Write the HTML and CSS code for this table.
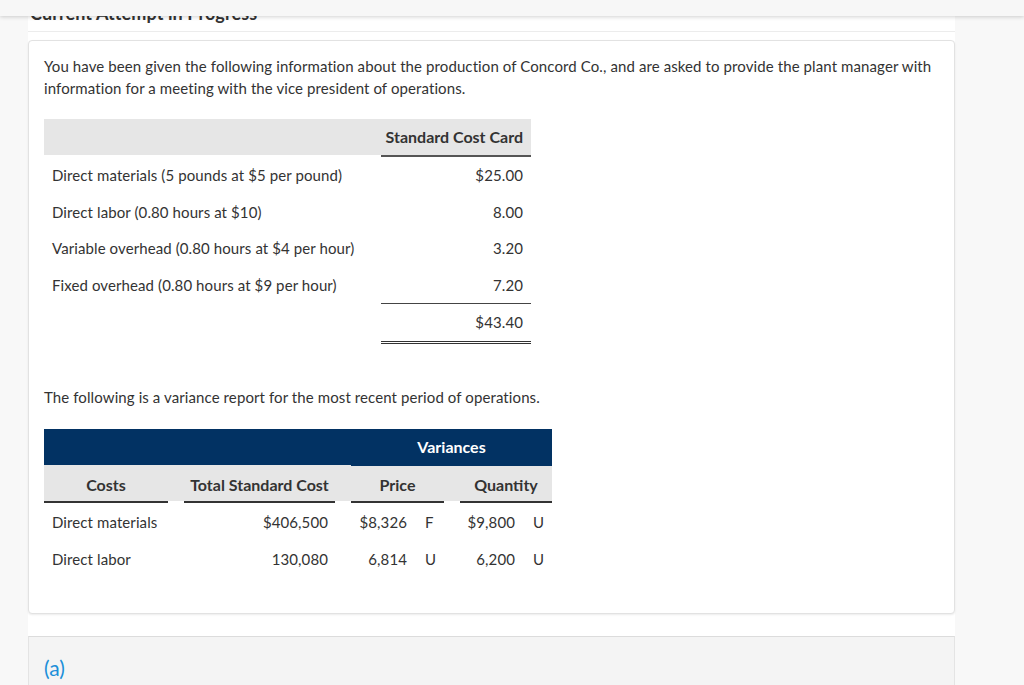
FILE: index.html
```html
<!DOCTYPE html>
<html lang="en">
<head>
<meta charset="utf-8">
<title>Current Attempt in Progress</title>
<link rel="stylesheet" href="styles.css">
</head>
<body>
<div class="topbar"></div>
<main class="page">
  <div class="attempt-title">Current Attempt in Progress</div>
  <section class="card">
    <p class="intro">You have been given the following information about the production of Concord Co., and are asked to provide the plant manager with information for a meeting with the vice president of operations.</p>

    <div class="cost-card">
      <div class="cc-head">
        <div class="cc-label"></div>
        <div class="cc-val cc-title">Standard Cost Card</div>
      </div>
      <div class="cc-row">
        <div class="cc-label">Direct materials (5 pounds at $5 per pound)</div>
        <div class="cc-val">$25.00</div>
      </div>
      <div class="cc-row">
        <div class="cc-label">Direct labor (0.80 hours at $10)</div>
        <div class="cc-val">8.00</div>
      </div>
      <div class="cc-row">
        <div class="cc-label">Variable overhead (0.80 hours at $4 per hour)</div>
        <div class="cc-val">3.20</div>
      </div>
      <div class="cc-row">
        <div class="cc-label">Fixed overhead (0.80 hours at $9 per hour)</div>
        <div class="cc-val">7.20</div>
      </div>
      <div class="cc-row cc-total-row">
        <div class="cc-label"></div>
        <div class="cc-val cc-total">$43.40</div>
      </div>
    </div>

    <p class="lead">The following is a variance report for the most recent period of operations.</p>

    <div class="variance">
      <div class="vr-band">
        <div class="vr-variances">Variances</div>
      </div>
      <div class="vr-head">
        <div class="vh">Costs</div>
        <div class="vh">Total Standard Cost</div>
        <div class="vh">Price</div>
        <div class="vh">Quantity</div>
      </div>
      <div class="vr-row">
        <div class="vr-label">Direct materials</div>
        <div class="vr-num">$406,500</div>
        <div class="vr-var"><span class="vr-amt">$8,326</span><span class="vr-flag">F</span></div>
        <div class="vr-var"><span class="vr-amt">$9,800</span><span class="vr-flag">U</span></div>
      </div>
      <div class="vr-row">
        <div class="vr-label">Direct labor</div>
        <div class="vr-num">130,080</div>
        <div class="vr-var"><span class="vr-amt">6,814</span><span class="vr-flag">U</span></div>
        <div class="vr-var"><span class="vr-amt">6,200</span><span class="vr-flag">U</span></div>
      </div>
    </div>
  </section>

  <section class="part">
    <div class="part-label">(a)</div>
  </section>
</main>
</body>
</html>
```

FILE: styles.css
```css
* { box-sizing: border-box; }

html, body {
  margin: 0;
  padding: 0;
}

body {
  background: #f8f8f8;
  font-family: Lato, "Open Sans", "Liberation Sans", sans-serif;
  font-size: 15px;
  line-height: 22px;
  letter-spacing: 0.1px;
  color: #333;
  overflow: hidden;
}

.topbar {
  position: fixed;
  top: 0;
  left: 0;
  right: 0;
  height: 16px;
  background: #f7f7f7;
  box-shadow: 0 1px 4px rgba(0, 0, 0, 0.18);
  z-index: 10;
}

.page {
  margin-left: 28px;
  width: 927px;
  min-height: 685px;
  background: #fff;
}

.attempt-title {
  height: 32px;
  padding: 1px 0 0 2px;
  font-size: 18px;
  line-height: 24px;
  font-weight: 700;
  color: #333;
  border-bottom: 1px solid #ececec;
}

.card {
  margin-top: 8px;
  border: 1px solid #e2e2e2;
  border-radius: 4px;
  box-shadow: 0 1px 2px rgba(0, 0, 0, 0.08);
  padding: 14px 15px 36px;
  background: #fff;
}

.intro, .lead {
  margin: 0;
}

/* standard cost card */
.cost-card {
  margin-top: 20px;
  width: 487px;
}

.cc-head, .cc-row {
  display: grid;
  grid-template-columns: 337px 150px;
}

.cc-head {
  height: 36px;
  background: #e6e6e6;
  align-items: center;
}

.cc-title {
  font-size: 16px;
  font-weight: 700;
  letter-spacing: 0;
  height: 36px;
  line-height: 36px;
  box-shadow: 0 2px 0 #555;
}

.cc-head + .cc-row {
  margin-top: 2px;
}

.cc-row {
  height: 36.5px;
  align-items: center;
}

.cc-label {
  padding-left: 8px;
}

.cc-val {
  text-align: right;
  padding-right: 8px;
}

.cc-total-row {
  height: 41px;
  align-items: stretch;
}

.cc-total {
  border-top: 1px solid #444;
  border-bottom: 3px double #333;
  line-height: 36px;
}

.lead {
  margin-top: 42px;
}

/* variance report */
.variance {
  margin-top: 21px;
  width: 508px;
}

.vr-band, .vr-head, .vr-row {
  display: grid;
  grid-template-columns: 124px 151px 93px 92px;
  column-gap: 16px;
}

.vr-band {
  height: 36px;
  background: #023263;
}

.vr-variances {
  grid-column: 3 / 5;
  text-align: center;
  color: #fff;
  font-size: 16px;
  font-weight: 700;
  letter-spacing: 0;
  line-height: 36px;
  box-shadow: 0 1px 0 #023263;
}

.vr-head {
  height: 36px;
  background: #e6e6e6;
}

.vh {
  text-align: center;
  font-size: 16px;
  font-weight: 700;
  letter-spacing: 0;
  line-height: 40px;
  height: 36px;
  box-shadow: 0 2px 0 #333;
}

.vr-head + .vr-row {
  margin-top: 2px;
}

.vr-row {
  height: 37px;
  align-items: center;
}

.vr-label {
  padding-left: 8px;
}

.vr-num {
  text-align: right;
  padding-right: 7px;
}

.vr-var {
  display: flex;
}

.vr-amt {
  flex: 1;
  text-align: right;
  padding-right: 8px;
}

.vr-flag {
  width: 29px;
  padding-left: 10px;
}

/* part (a) */
.part {
  margin-top: 22px;
  background: #f4f4f4;
  border: 1px solid #e4e4e4;
  border-top-color: #dcdcdc;
  height: 60px;
  padding: 17px 15px;
}

.part-label {
  color: #1b8fd9;
  font-size: 21px;
  line-height: 28px;
  font-weight: 400;
  letter-spacing: 0;
}
```
